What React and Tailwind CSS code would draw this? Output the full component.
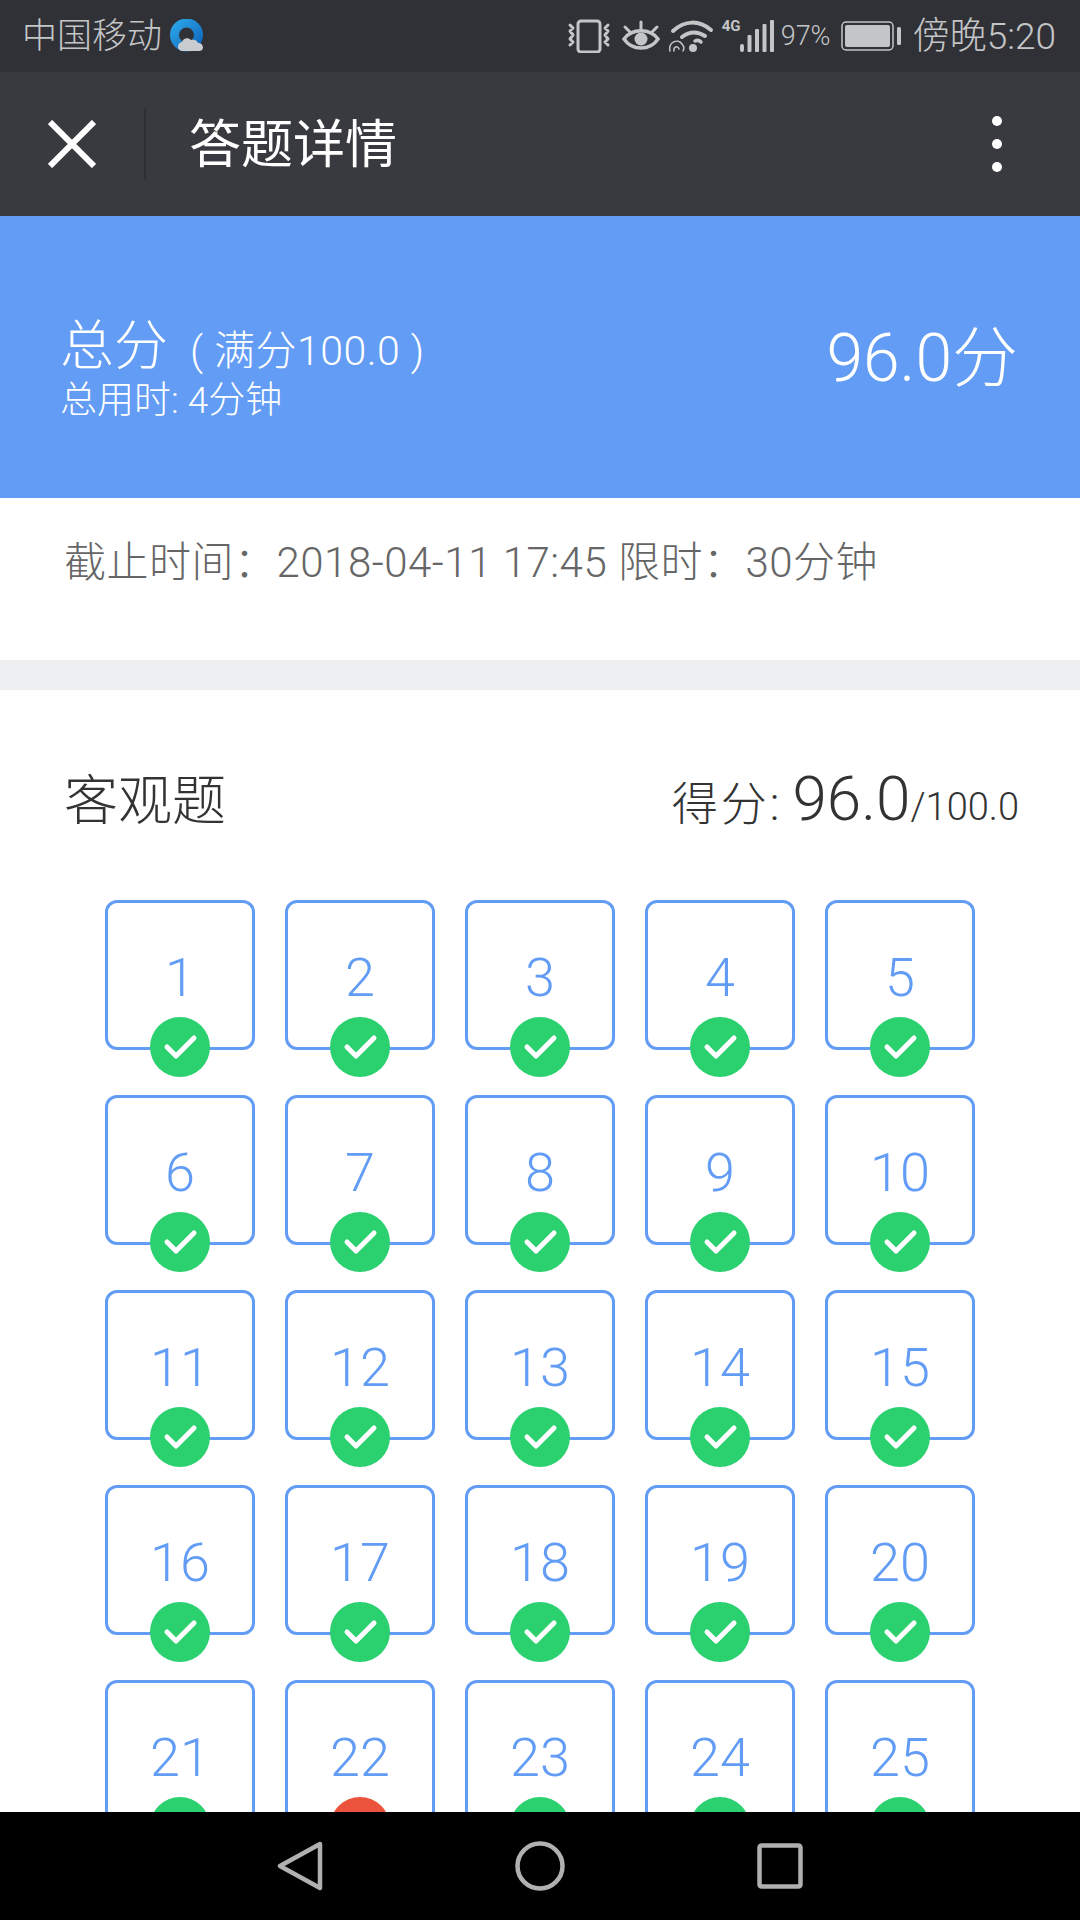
import React from 'react';

const questions = Array.from({ length: 25 }, (_, i) => i + 1);

const QIcon = () => (
  <svg width="34" height="34" viewBox="0 0 34 34">
    <defs>
      <linearGradient id="qring" x1="0" y1="0" x2="1" y2="1">
        <stop offset="0" stopColor="#2aa3e6" />
        <stop offset="1" stopColor="#1268bd" />
      </linearGradient>
    </defs>
    <circle cx="16.500" cy="16" r="12" fill="none" stroke="url(#qring)" strokeWidth="9" />
    <path d="M13 32a4.500 4.500 0 0 1-1-9c1-4 6-5 9-2 3-1 6 0 7 3 3 0 5 2 5 4.500s-2 3.500-4 3.500z" fill="#c9cccf" />
  </svg>
);

const VibrateIcon = () => (
  <svg width="44" height="34" viewBox="0 0 44 34" fill="none" stroke="#c4c5c7">
    <rect x="11" y="2" width="22" height="31" rx="3" strokeWidth="3" />
    <path d="M3 6l3 3-3 3 3 4-3 4 3 3-3 3M41 6l-3 3 3 3-3 4 3 4-3 3 3 3" strokeWidth="3" strokeLinecap="round" strokeLinejoin="round" />
  </svg>
);

const EyeIcon = () => (
  <svg width="38" height="32" viewBox="0 0 38 32" fill="none" stroke="#c4c5c7">
    <path d="M2 19c8-11 26-11 34 0-8 12-26 12-34 0z" strokeWidth="3.500" />
    <circle cx="19" cy="19" r="6.500" fill="#c4c5c7" stroke="none" />
    <path d="M19 2v7M3 7l5 5M35 7l-5 5" strokeWidth="3" strokeLinecap="round" />
  </svg>
);

const WifiIcon = () => (
  <svg width="46" height="34" viewBox="0 0 46 34" fill="none" stroke="#c4c5c7" strokeLinecap="round">
    <path d="M5 12C17 1 31 1 43 11" strokeWidth="4" />
    <path d="M14 18c8-6 15-6 23-1" strokeWidth="4" />
    <path d="M27 22c2-1 4-1 6 1" strokeWidth="3.500" />
    <circle cx="25" cy="29" r="4" fill="#c4c5c7" stroke="none" />
    <path d="M2 32c-2-9 8-13 12-7 2 2 2 5 1 7M6 32c-1-4 4-6 5-2" strokeWidth="1.500" />
  </svg>
);

const SignalIcon = () => (
  <svg width="34" height="34" viewBox="0 0 34 34" fill="#c4c5c7">
    <rect x="0" y="25" width="4" height="8" rx="2" />
    <rect x="7.500" y="16" width="4" height="17" rx="1" />
    <rect x="15" y="10" width="4" height="23" rx="1" />
    <rect x="22.500" y="5" width="4" height="28" rx="1" />
    <rect x="30" y="1" width="4" height="32" rx="1" />
  </svg>
);

const BatteryIcon = () => (
  <svg width="60" height="30" viewBox="0 0 60 30">
    <rect x="1" y="1" width="51" height="28" rx="4" fill="none" stroke="#c4c5c7" strokeWidth="1.500" />
    <rect x="4" y="4" width="45" height="22" rx="2" fill="#c4c5c7" />
    <rect x="56" y="6" width="4" height="18" rx="1.500" fill="#c4c5c7" />
  </svg>
);

const CheckBadge = ({ wrong }) => (
  <div className={`absolute left-1/2 -translate-x-1/2 -bottom-[30px] w-[60px] h-[60px] rounded-full flex items-center justify-center ${wrong ? 'bg-[#ec533d]' : 'bg-[#2bd16f]'}`}>
    <svg width="60" height="60" viewBox="0 0 60 60" fill="none" stroke="#fff" strokeWidth="5" strokeLinecap="round" strokeLinejoin="round">
      <path d="M17 30l9 9 18-18" />
    </svg>
  </div>
);

const Tile = ({ num }) => (
  <div className="relative w-[150px] h-[150px] box-border border-[3px] border-[#629cf4] rounded-[12px] bg-white flex items-center justify-center pt-[6px]">
    <span className="text-[#629cf4] text-[54px] leading-none font-light">{num}</span>
    <CheckBadge wrong={num === 22} />
  </div>
);

export default function App() {
  return (
    <div className="w-[1080px] h-[1920px] overflow-hidden flex flex-col bg-white [font-family:'Roboto','Noto_Sans_CJK_SC',sans-serif] font-light">
      {/* status bar */}
      <div className="h-[72px] shrink-0 bg-[#303136] flex items-center justify-between pl-[22px] pr-[24px] text-[#c4c5c7]">
        <div className="flex items-center gap-[8px]">
          <span className="text-[35px] leading-none">中国移动</span>
          <QIcon />
        </div>
        <div className="flex items-center">
          <VibrateIcon />
          <div className="ml-[11px]"><EyeIcon /></div>
          <div className="ml-[8px]"><WifiIcon /></div>
          <div className="relative ml-[8px] w-[52px] h-[34px] flex justify-end">
            <span className="absolute left-0 top-0 text-[15px] leading-none font-bold">4G</span>
            <SignalIcon />
          </div>
          <span className="ml-[7px] w-[47px] text-[27px] leading-none whitespace-nowrap">97%</span>
          <div className="ml-[13px]"><BatteryIcon /></div>
          <span className="ml-[12px] text-[37px] leading-none whitespace-nowrap">傍晚5:20</span>
        </div>
      </div>

      {/* title bar */}
      <div className="h-[144px] shrink-0 bg-[#393a3f] flex items-center text-white">
        <svg className="ml-[48px] shrink-0" width="48" height="48" viewBox="0 0 48 48" stroke="#fff" strokeWidth="6">
          <path d="M2 2l44 44M46 2L2 46" />
        </svg>
        <div className="ml-[48px] w-[2px] h-[72px] bg-[#2e2f33]" />
        <h1 className="ml-[43px] mt-[4px] text-[52px] leading-none font-normal">答题详情</h1>
        <div className="ml-auto mr-[78px] flex flex-col gap-[13px]">
          <div className="w-[10px] h-[10px] rounded-full bg-white" />
          <div className="w-[10px] h-[10px] rounded-full bg-white" />
          <div className="w-[10px] h-[10px] rounded-full bg-white" />
        </div>
      </div>

      <div className="flex-1 overflow-hidden">
        {/* score banner */}
        <div className="h-[282px] bg-[#629cf4] text-white flex justify-between pl-[60px] pr-[62px] pt-[104px]">
          <div>
            <div className="flex items-baseline h-[58px]">
              <span className="text-[54px] leading-none">总分</span>
              <span className="ml-[22px] text-[41px] leading-none tracking-[0.5px] whitespace-nowrap">( 满分100.0 )</span>
            </div>
            <div className="text-[37px] leading-none mt-[4px] whitespace-nowrap">总用时: 4分钟</div>
          </div>
          <div className="text-[66px] leading-none mt-[6px]">96.0分</div>
        </div>

        {/* deadline */}
        <div className="h-[162px] pl-[64px] pt-[44px] text-[#666] text-[42px] leading-none tracking-[0.5px]">
          截止时间：2018-04-11 17:45 限时：30分钟
        </div>

        <div className="h-[30px] bg-[#eeeff1]" />

        {/* objective questions */}
        <div className="pl-[64px] pr-[61px] pt-[78px] flex items-baseline justify-between text-[#333]">
          <span className="text-[54px] leading-none">客观题</span>
          <span className="text-[38px] leading-none">
            <span className="text-[46px] tracking-[3px] mr-[10px]">得分:</span><span className="text-[62px]">96.0</span>/100.0
          </span>
        </div>

        <div className="mt-[70px] ml-[105px] grid grid-cols-[repeat(5,150px)] gap-x-[30px] gap-y-[45px]">
          {questions.map((n) => (
            <Tile key={n} num={n} />
          ))}
        </div>
      </div>

      {/* android nav */}
      <div className="h-[108px] shrink-0 bg-black relative z-10 flex items-center justify-center gap-[192px]">
        <svg width="46" height="50" viewBox="0 0 46 50" fill="none" stroke="#b0b0b0" strokeWidth="4.500" strokeLinejoin="round">
          <path d="M43 3L3 25l40 22z" />
        </svg>
        <svg width="50" height="50" viewBox="0 0 50 50" fill="none" stroke="#b0b0b0" strokeWidth="4.500">
          <circle cx="25" cy="25" r="22.500" />
        </svg>
        <svg width="46" height="46" viewBox="0 0 46 46" fill="none" stroke="#b0b0b0" strokeWidth="4.500">
          <rect x="2.500" y="2.500" width="41" height="41" rx="2" />
        </svg>
      </div>
    </div>
  );
}
